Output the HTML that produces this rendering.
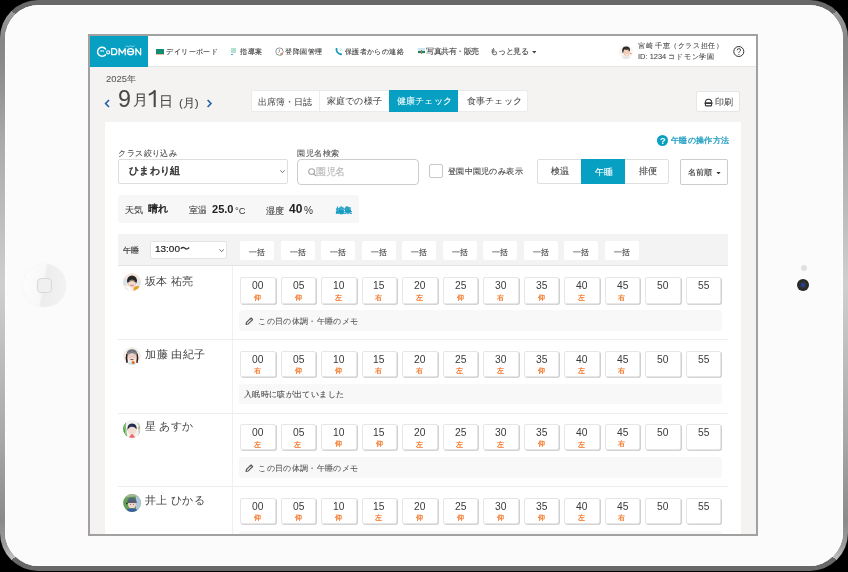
<!DOCTYPE html>
<html lang="ja">
<head>
<meta charset="utf-8">
<style>
*{box-sizing:border-box;margin:0;padding:0}
html,body{width:848px;height:572px;overflow:hidden;background:#000;font-family:"Liberation Sans",sans-serif;color:#333}
#dev{position:absolute;left:0;top:0;width:848px;height:571px;border-radius:38px;
 background:conic-gradient(from -56.4deg at 50% 50%,#686868 0deg 112.8deg,transparent 112.8deg 180deg,#686868 180deg 292.8deg,transparent 292.8deg 360deg),
 linear-gradient(to bottom,#a8a8a8 0px,#9a9a9a 14px,#858585 40px,#8c8c8c 70px,#aaa 140px,#cfcfcf 285px,#a8a8a8 440px,#8a8a8a 520px,#9a9a9a 545px,#c4c4c4 560px,#c4c4c4 571px)}
#bez{position:absolute;left:5px;top:5px;width:838px;height:561px;border-radius:34px;background:#fbfbfb;box-shadow:inset 0 1px 0 #fff,inset 1px 0 0 #fff,inset -1px 0 0 #fff,inset 0 -1px 0 #fff}
#topband{position:absolute;left:30px;top:0;width:788px;height:5px;background:#666}
#botband{position:absolute;left:30px;top:565px;width:788px;height:6px;background:linear-gradient(#666,#666 80%,#777)}
#home{position:absolute;left:23px;top:264px;width:43px;height:43px;border-radius:50%;background:linear-gradient(100deg,#fdfdfd 0%,#f8f8f8 45%,#ededed 50%,#f3f3f3 100%);box-shadow:0 0 1px #ddd}
#home i{position:absolute;left:14px;top:14px;width:15px;height:15px;border-radius:4px;border:1px solid #d8d8d8;background:#f0f0f0}
#cam1{position:absolute;left:801px;top:265px;width:6px;height:6px;border-radius:50%;background:#e0e0e0}
#cam2{position:absolute;left:797px;top:279px;width:12px;height:12px;border-radius:50%;background:radial-gradient(circle at 50% 50%,#2040a0 0,#2040a0 1.5px,#333 2.5px,#222 6px)}
#scr{position:absolute;left:88px;top:34px;width:670px;height:502px;border:2px solid #a2a0a0;background:#f4f3f1;overflow:hidden}
#app{position:absolute;left:0;top:0;width:666px;height:498px;overflow:hidden}
.a{position:absolute}
.t{white-space:nowrap;transform-origin:0 0;filter:brightness(1)}
.av{width:18px;height:18px;border-radius:50%;background:radial-gradient(circle at 50% 55%,#f4d2b8 0,#f4d2b8 35%,#6a4a3a 37%,#e8e0d8 60%,#d7b58a 100%)}
.av1{background:radial-gradient(circle at 50% 55%,#f4d2b8 0,#f4d2b8 35%,#8a6a5a 37%,#eee 60%,#cfc 100%)}
.av2{background:radial-gradient(circle at 50% 55%,#f4d2b8 0,#f4d2b8 35%,#3a3a3a 37%,#e9eee3 60%,#7ab07a 100%)}
.av3{background:radial-gradient(circle at 50% 55%,#f4d2b8 0,#f4d2b8 35%,#3a4a6a 37%,#c8d8c0 60%,#7aa07a 100%)}
</style>
</head>
<body>
<div id="dev"></div>
<div id="bez"></div>
<div id="home"><i></i></div>
<div id="cam1"></div>
<div id="cam2"></div>
<div id="scr"><div id="app">
<div class="a" style="left:0.00px;top:0.00px;width:666.00px;height:31.00px;background:#fff;border-bottom:1px solid #e6e6e6"></div>
<div class="a" style="left:0.00px;top:0.00px;width:58.00px;height:31.00px;background:#07a0c3"></div>
<svg class="a" style="left:4px;top:5px" width="50" height="20" viewBox="94 41 50 20">
<path d="M105.5 48.9 A4.5 4.5 0 1 0 105.5 54.7" fill="none" stroke="#fff" stroke-width="1.5" stroke-linecap="round"/>
<rect x="100.6" y="50.1" width="1" height="2" rx="0.4" fill="#fff"/><rect x="102.6" y="50.1" width="1" height="2" rx="0.4" fill="#fff"/>
<circle cx="108.15" cy="52.3" r="1.55" fill="none" stroke="#fff" stroke-width="1.1"/>
<g fill="none" stroke="#fff" stroke-width="1.3" stroke-linejoin="round" stroke-linecap="round">
<path d="M111.7 48.7 V54.7 H113.9 Q116.8 54.7 116.8 51.7 Q116.8 48.7 113.9 48.7 Z"/>
<path d="M119.1 54.8 V48.7 L122.15 53.2 L125.2 48.7 V54.8"/>
<circle cx="130.55" cy="51.7" r="3.05"/><path d="M128.6 51.7 H132.5"/>
<path d="M135.9 54.8 V48.7 L140.6 54.8 V48.7"/>
</g>
<path d="M125.5 46.6 Q126.5 45.6 127.5 46.4 Q128.6 47.2 129.6 46.2 Q130.6 45.4 131.6 46.3 Q132.7 47.1 134.5 45.8" fill="none" stroke="#fff" stroke-width="0.55" opacity="0.9"/>
</svg>
<div class="a" style="left:66.20px;top:12.80px;width:7.40px;height:5.80px;background:#118c74;border-bottom:1.2px solid #f4b896"></div>
<div class="a" style="left:141.40px;top:12.20px;width:5.00px;height:6.80px;background:linear-gradient(#b5e0d0 0,#b5e0d0 75%,#fff 75%)"></div>
<div class="a" style="left:141.40px;top:17.60px;width:1.60px;height:1.40px;background:#39a9d8"></div>
<svg class="a" style="left:184.50px;top:11.00px" width="9.5" height="9.5" viewBox="0 0 9.5 9.5"><circle cx="4.5" cy="4.6" r="3.7" fill="#fff" stroke="#8a8a8a" stroke-width="0.9"/><path d="M4.5 2.4 V4.6 L3 5.6" fill="none" stroke="#777" stroke-width="0.7"/><circle cx="6.6" cy="7.1" r="1.3" fill="#e98a5a"/><circle cx="5.6" cy="7.9" r="0.8" fill="#6cc3d6"/></svg>
<svg class="a" style="left:245.00px;top:11.00px" width="9" height="9" viewBox="0 0 9 9"><path d="M1.4 2.2 Q1.2 5.6 5.6 7.4" fill="none" stroke="#1395bb" stroke-width="1.5" stroke-linecap="round"/><circle cx="1.6" cy="1.9" r="0.95" fill="#1395bb"/><circle cx="6" cy="7.2" r="1" fill="#1395bb"/><path d="M4.9 1 Q6.8 1.8 7.5 3.8 M4.5 2.6 Q5.6 3 6 4" fill="none" stroke="#a8d8e8" stroke-width="0.8"/></svg>
<div class="a" style="left:327.50px;top:12.00px;width:7.00px;height:6.00px;background:linear-gradient(#c5e8f4 0,#c5e8f4 55%,#19885f 55%,#19885f 80%,#def 80%)"></div>
<div class="a" style="left:330.70px;top:14.00px;width:1.80px;height:3.50px;background:#e8622f"></div>
<div class="a t" style="left:75.83px;top:11.59px;font-size:29.40px;line-height:29.40px;color:#444;font-weight:400;-webkit-text-stroke:0.45px #444;transform:scale(0.2500);">デイリーボード</div>
<div class="a t" style="left:150.20px;top:11.77px;font-size:29.83px;line-height:29.83px;color:#444;font-weight:400;-webkit-text-stroke:0.45px #444;transform:scale(0.2500);">指導案</div>
<div class="a t" style="left:195.01px;top:11.74px;font-size:29.74px;line-height:29.74px;color:#444;font-weight:400;-webkit-text-stroke:0.45px #444;transform:scale(0.2500);">登降園管理</div>
<div class="a t" style="left:255.10px;top:11.81px;font-size:29.21px;line-height:29.21px;color:#444;font-weight:400;-webkit-text-stroke:0.45px #444;transform:scale(0.2500);">保護者からの連絡</div>
<div class="a t" style="left:336.31px;top:11.69px;font-size:30.14px;line-height:30.14px;color:#444;font-weight:400;-webkit-text-stroke:0.45px #444;transform:scale(0.2500);">写真共有・販売</div>
<div class="a t" style="left:400.19px;top:11.50px;font-size:30.15px;line-height:30.15px;color:#444;font-weight:400;-webkit-text-stroke:0.45px #444;transform:scale(0.2500);">もっと見る</div>
<svg class="a" style="left:441.80px;top:15.20px" width="4.5" height="2.5" viewBox="0 0 5 3"><path d="M0 0 L5 0 L2.5 3Z" fill="#444"/></svg>
<svg class="a" style="left:529.00px;top:8.60px" width="14" height="14" viewBox="0 0 14 14"><defs><clipPath id="ua"><circle cx="7" cy="7" r="6.9"/></clipPath></defs><g clip-path="url(#ua)">
<rect width="14" height="14" fill="#f6f4f2"/><path d="M3.2 7 Q2.6 1.6 7.4 1.6 Q11.6 1.8 11 6.4 Q9.6 3.6 6.4 4.2 Q4.6 4.8 4.2 8.4Z" fill="#2a2624"/>
<ellipse cx="7.6" cy="7.4" rx="3.1" ry="3.6" fill="#f0cdb8"/><path d="M6.4 9.6 Q7.6 10.4 9 9.5" stroke="#fff" stroke-width="0.7" fill="none"/><path d="M6.2 4.3 Q9 3.6 10.8 6" fill="none" stroke="#2a2624" stroke-width="1"/>
<path d="M2 14 Q4 10.6 7.6 11.4 Q11 10.8 12.5 14Z" fill="#e8e4e0"/><circle cx="11.8" cy="8.6" r="0.8" fill="#f08050"/></g></svg>
<div class="a t" style="left:548.42px;top:6.27px;font-size:29.53px;line-height:29.53px;color:#444;font-weight:400;-webkit-text-stroke:0.30px #444;transform:scale(0.2500);">宮崎 千恵（クラス担任）</div>
<div class="a t" style="left:547.85px;top:17.01px;font-size:29.91px;line-height:29.91px;color:#444;font-weight:400;-webkit-text-stroke:0.30px #444;transform:scale(0.2500);">ID: 1234 コドモン学園</div>
<svg class="a" style="left:643.00px;top:10.00px" width="12" height="11" viewBox="0 0 12 11"><circle cx="5.8" cy="5.5" r="5" fill="none" stroke="#333" stroke-width="1"/><path d="M4.2 4.3 Q4.2 2.6 5.9 2.6 Q7.6 2.6 7.6 4.1 Q7.6 5 6.6 5.5 Q5.9 5.9 5.9 6.8" fill="none" stroke="#333" stroke-width="0.9"/><circle cx="5.9" cy="8.3" r="0.55" fill="#333"/></svg>
<div class="a t" style="left:16.33px;top:38.14px;font-size:37.50px;line-height:37.50px;color:#555;font-weight:400;-webkit-text-stroke:0.20px #555;transform:scale(0.2500);">2025年</div>
<svg class="a" style="left:14.00px;top:62.50px" width="7" height="9" viewBox="0 0 7 9"><path d="M5 1 L1.6 4.5 L5 8" fill="none" stroke="#1d5fa8" stroke-width="1.6"/></svg>
<svg class="a" style="left:116.00px;top:62.50px" width="7" height="9" viewBox="0 0 7 9"><path d="M1.6 1 L5 4.5 L1.6 8" fill="none" stroke="#1d5fa8" stroke-width="1.6"/></svg>
<div class="a t" style="left:28.10px;top:51.10px;font-size:46.59px;line-height:46.59px;color:#484848;font-weight:400;-webkit-text-stroke:0.00px #484848;transform:scale(0.5000);">9</div>
<div class="a t" style="left:43.30px;top:57.36px;font-size:58.63px;line-height:58.63px;color:#484848;font-weight:400;-webkit-text-stroke:0.20px #484848;transform:scale(0.2500);">月</div>
<svg class="a" style="left:56.00px;top:52.00px" width="14" height="21" viewBox="146 88 14 21"><path d="M154.7 90.3 V107.1" stroke="#484848" stroke-width="2.1"/><path d="M155 90.6 Q152.6 93.6 148.8 94.9" fill="none" stroke="#484848" stroke-width="1.8"/></svg>
<div class="a t" style="left:69.02px;top:57.53px;font-size:56.89px;line-height:56.89px;color:#484848;font-weight:400;-webkit-text-stroke:0.20px #484848;transform:scale(0.2500);">日</div>
<div class="a t" style="left:88.72px;top:60.65px;font-size:46.92px;line-height:46.92px;color:#484848;font-weight:400;-webkit-text-stroke:0.30px #484848;transform:scale(0.2500);">(月)</div>
<div class="a" style="left:160.80px;top:54.20px;width:277.00px;height:21.40px;background:#fff;border:1px solid #ebebeb;border-radius:2px"></div>
<div class="a" style="left:229.30px;top:55.00px;width:1.00px;height:20.00px;background:#ececec"></div>
<div class="a" style="left:299.00px;top:54.20px;width:69.30px;height:21.50px;background:#07a0c3"></div>
<div class="a t" style="left:167.92px;top:60.62px;font-size:36.32px;line-height:36.32px;color:#444;font-weight:400;-webkit-text-stroke:0.10px #444;transform:scale(0.2500);">出席簿・日誌</div>
<div class="a t" style="left:237.45px;top:60.56px;font-size:35.90px;line-height:35.90px;color:#444;font-weight:400;-webkit-text-stroke:0.10px #444;transform:scale(0.2500);">家庭での様子</div>
<div class="a t" style="left:307.10px;top:60.58px;font-size:35.80px;line-height:35.80px;color:#fff;font-weight:400;-webkit-text-stroke:0.30px #fff;transform:scale(0.2500);">健康チェック</div>
<div class="a t" style="left:376.68px;top:60.59px;font-size:35.68px;line-height:35.68px;color:#444;font-weight:400;-webkit-text-stroke:0.10px #444;transform:scale(0.2500);">食事チェック</div>
<div class="a" style="left:606.30px;top:55.40px;width:44.20px;height:21.00px;background:#fff;border:1px solid #e6e6e6;border-radius:2px"></div>
<svg class="a" style="left:614.00px;top:61.50px" width="9" height="9" viewBox="0 0 9 9"><path d="M1.4 4.4 Q1.4 1.3 4.5 1.3 Q7.6 1.3 7.6 4.4" fill="none" stroke="#333" stroke-width="1.1"/><rect x="0.5" y="4.2" width="8" height="1.9" rx="0.4" fill="#333"/><path d="M1.4 6 V6.9 Q1.4 7.9 2.4 7.9 H6.6 Q7.6 7.9 7.6 6.9 V6" fill="none" stroke="#333" stroke-width="1.1"/></svg>
<div class="a t" style="left:624.72px;top:61.10px;font-size:36.27px;line-height:36.27px;color:#444;font-weight:400;-webkit-text-stroke:0.20px #444;transform:scale(0.2500);">印刷</div>
<div class="a" style="left:15.00px;top:86.00px;width:636.00px;height:420.00px;background:#fff"></div>
<div class="a" style="left:567px;top:98.80000000000001px;width:11.2px;height:11.2px;border-radius:50%;background:#07a0c3"></div>
<div class="a t" style="left:569.67px;top:99.59px;font-size:37.71px;line-height:37.71px;color:#fff;font-weight:700;-webkit-text-stroke:0.00px #fff;transform:scale(0.2500);">?</div>
<div class="a t" style="left:580.69px;top:100.49px;font-size:32.86px;line-height:32.86px;color:#1a9cc2;font-weight:400;-webkit-text-stroke:1.20px #1a9cc2;transform:scale(0.2500);">午睡の操作方法</div>
<div class="a t" style="left:27.79px;top:112.93px;font-size:32.58px;line-height:32.58px;color:#555;font-weight:400;-webkit-text-stroke:0.45px #555;transform:scale(0.2500);">クラス絞り込み</div>
<div class="a" style="left:27.80px;top:123.20px;width:170.00px;height:25.30px;border:1px solid #dedede;border-radius:2px;background:#fff"></div>
<div class="a t" style="left:38.50px;top:130.04px;font-size:39.88px;line-height:39.88px;color:#333;font-weight:400;-webkit-text-stroke:1.80px #333;transform:scale(0.2500);">ひまわり組</div>
<svg class="a" style="left:189.50px;top:133.50px" width="5" height="3" viewBox="0 0 5 3"><path d="M0.3 0.3 L2.5 2.6 L4.7 0.3" fill="none" stroke="#555" stroke-width="0.8"/></svg>
<div class="a t" style="left:207.48px;top:112.68px;font-size:33.71px;line-height:33.71px;color:#555;font-weight:400;-webkit-text-stroke:0.45px #555;transform:scale(0.2500);">園児名検索</div>
<div class="a" style="left:207.40px;top:123.00px;width:121.40px;height:25.60px;border:1px solid #cdcdcd;border-radius:4px;background:#fff"></div>
<svg class="a" style="left:218.30px;top:131.90px" width="8.5" height="8.5" viewBox="0 0 8.5 8.5"><circle cx="3.6" cy="3.6" r="2.9" fill="none" stroke="#a8a8a8" stroke-width="1.1"/><path d="M5.7 5.7 L7.9 7.9" stroke="#a8a8a8" stroke-width="1.3" stroke-linecap="round"/></svg>
<div class="a t" style="left:225.92px;top:130.99px;font-size:38.29px;line-height:38.29px;color:#b8b8b8;font-weight:400;-webkit-text-stroke:0.45px #b8b8b8;transform:scale(0.2500);">園児名</div>
<div class="a" style="left:338.60px;top:128.10px;width:14.20px;height:14.30px;border:1px solid #c8c8c8;border-radius:2px;background:#fff"></div>
<div class="a t" style="left:357.89px;top:130.89px;font-size:32.89px;line-height:32.89px;color:#444;font-weight:400;-webkit-text-stroke:0.45px #444;transform:scale(0.2500);">登園中園児のみ表示</div>
<div class="a" style="left:447.30px;top:123.00px;width:132.00px;height:25.40px;border:1px solid #dfdfdf;border-radius:2px;background:#fff"></div>
<div class="a" style="left:491.30px;top:123.00px;width:43.70px;height:25.40px;background:#07a0c3"></div>
<div class="a t" style="left:461.10px;top:131.10px;font-size:34.84px;line-height:34.84px;color:#444;font-weight:400;-webkit-text-stroke:0.45px #444;transform:scale(0.2500);">検温</div>
<div class="a t" style="left:504.57px;top:131.49px;font-size:36.10px;line-height:36.10px;color:#fff;font-weight:400;-webkit-text-stroke:0.45px #fff;transform:scale(0.2500);">午睡</div>
<div class="a t" style="left:548.80px;top:130.90px;font-size:35.49px;line-height:35.49px;color:#444;font-weight:400;-webkit-text-stroke:0.45px #444;transform:scale(0.2500);">排便</div>
<div class="a" style="left:590.30px;top:123.20px;width:47.50px;height:25.40px;border:1px solid #cccccc;border-radius:2px;background:#fff"></div>
<div class="a t" style="left:598.40px;top:132.41px;font-size:32.27px;line-height:32.27px;color:#333;font-weight:400;-webkit-text-stroke:0.45px #333;transform:scale(0.2500);">名前順</div>
<svg class="a" style="left:625.60px;top:135.60px" width="5" height="2.5" viewBox="0 0 5 3"><path d="M0 0 L5 0 L2.5 3Z" fill="#333"/></svg>
<div class="a" style="left:28.40px;top:158.90px;width:240.40px;height:28.50px;background:#f7f7f7;border-radius:2px"></div>
<div class="a t" style="left:34.94px;top:169.31px;font-size:36.84px;line-height:36.84px;color:#444;font-weight:400;-webkit-text-stroke:0.45px #444;transform:scale(0.2500);">天気</div>
<div class="a t" style="left:58.20px;top:167.81px;font-size:39.90px;line-height:39.90px;color:#222;font-weight:400;-webkit-text-stroke:1.80px #222;transform:scale(0.2500);">晴れ</div>
<div class="a t" style="left:99.18px;top:170.06px;font-size:34.46px;line-height:34.46px;color:#444;font-weight:400;-webkit-text-stroke:0.45px #444;transform:scale(0.2500);">室温</div>
<div class="a t" style="left:122.02px;top:167.88px;font-size:44.16px;line-height:44.16px;color:#222;font-weight:700;-webkit-text-stroke:0.00px #222;transform:scale(0.2500);">25.0</div>
<div class="a t" style="left:145.34px;top:169.78px;font-size:37.78px;line-height:37.78px;color:#333;font-weight:400;-webkit-text-stroke:0.00px #333;transform:scale(0.2500);">°C</div>
<div class="a t" style="left:175.87px;top:169.69px;font-size:36.57px;line-height:36.57px;color:#444;font-weight:400;-webkit-text-stroke:0.45px #444;transform:scale(0.2500);">湿度</div>
<div class="a t" style="left:198.70px;top:167.40px;font-size:48.00px;line-height:48.00px;color:#222;font-weight:700;-webkit-text-stroke:0.00px #222;transform:scale(0.2500);">40</div>
<div class="a t" style="left:213.70px;top:169.52px;font-size:40.25px;line-height:40.25px;color:#333;font-weight:400;-webkit-text-stroke:0.00px #333;transform:scale(0.2500);">%</div>
<div class="a t" style="left:246.30px;top:169.53px;font-size:31.38px;line-height:31.38px;color:#1a9cc2;font-weight:400;-webkit-text-stroke:2.00px #1a9cc2;transform:scale(0.2500);">編集</div>
<div class="a" style="left:27.80px;top:197.80px;width:610.20px;height:32.70px;background:#f3f3f3;border-bottom:1px solid #e3e3e3"></div>
<div class="a t" style="left:32.79px;top:210.05px;font-size:33.23px;line-height:33.23px;color:#333;font-weight:400;-webkit-text-stroke:0.60px #333;transform:scale(0.2500);">午睡</div>
<div class="a" style="left:59.50px;top:204.90px;width:77.10px;height:18.40px;background:#fff;border:1px solid #e3e3e3;border-radius:2px"></div>
<div class="a t" style="left:65.35px;top:207.86px;font-size:39.94px;line-height:39.94px;color:#222;font-weight:400;-webkit-text-stroke:0.80px #222;transform:scale(0.2500);">13:00〜</div>
<svg class="a" style="left:128.90px;top:212.90px" width="5.3" height="3.1" viewBox="0 0 5 3"><path d="M0.3 0.3 L2.5 2.6 L4.7 0.3" fill="none" stroke="#555" stroke-width="0.8"/></svg>
<div class="a" style="left:150.40px;top:204.90px;width:33.70px;height:19.00px;background:#fff;border-radius:2px"></div>
<div class="a t" style="left:159.18px;top:212.16px;font-size:33.45px;line-height:33.45px;color:#444;font-weight:400;-webkit-text-stroke:0.45px #444;transform:scale(0.2500);">一括</div>
<div class="a" style="left:190.90px;top:204.90px;width:33.70px;height:19.00px;background:#fff;border-radius:2px"></div>
<div class="a t" style="left:199.68px;top:212.16px;font-size:33.45px;line-height:33.45px;color:#444;font-weight:400;-webkit-text-stroke:0.45px #444;transform:scale(0.2500);">一括</div>
<div class="a" style="left:231.40px;top:204.90px;width:33.70px;height:19.00px;background:#fff;border-radius:2px"></div>
<div class="a t" style="left:240.18px;top:212.16px;font-size:33.45px;line-height:33.45px;color:#444;font-weight:400;-webkit-text-stroke:0.45px #444;transform:scale(0.2500);">一括</div>
<div class="a" style="left:271.90px;top:204.90px;width:33.70px;height:19.00px;background:#fff;border-radius:2px"></div>
<div class="a t" style="left:280.68px;top:212.16px;font-size:33.45px;line-height:33.45px;color:#444;font-weight:400;-webkit-text-stroke:0.45px #444;transform:scale(0.2500);">一括</div>
<div class="a" style="left:312.40px;top:204.90px;width:33.70px;height:19.00px;background:#fff;border-radius:2px"></div>
<div class="a t" style="left:321.18px;top:212.16px;font-size:33.45px;line-height:33.45px;color:#444;font-weight:400;-webkit-text-stroke:0.45px #444;transform:scale(0.2500);">一括</div>
<div class="a" style="left:352.90px;top:204.90px;width:33.70px;height:19.00px;background:#fff;border-radius:2px"></div>
<div class="a t" style="left:361.68px;top:212.16px;font-size:33.45px;line-height:33.45px;color:#444;font-weight:400;-webkit-text-stroke:0.45px #444;transform:scale(0.2500);">一括</div>
<div class="a" style="left:393.40px;top:204.90px;width:33.70px;height:19.00px;background:#fff;border-radius:2px"></div>
<div class="a t" style="left:402.18px;top:212.16px;font-size:33.45px;line-height:33.45px;color:#444;font-weight:400;-webkit-text-stroke:0.45px #444;transform:scale(0.2500);">一括</div>
<div class="a" style="left:433.90px;top:204.90px;width:33.70px;height:19.00px;background:#fff;border-radius:2px"></div>
<div class="a t" style="left:442.68px;top:212.16px;font-size:33.45px;line-height:33.45px;color:#444;font-weight:400;-webkit-text-stroke:0.45px #444;transform:scale(0.2500);">一括</div>
<div class="a" style="left:474.40px;top:204.90px;width:33.70px;height:19.00px;background:#fff;border-radius:2px"></div>
<div class="a t" style="left:483.18px;top:212.16px;font-size:33.45px;line-height:33.45px;color:#444;font-weight:400;-webkit-text-stroke:0.45px #444;transform:scale(0.2500);">一括</div>
<div class="a" style="left:514.90px;top:204.90px;width:33.70px;height:19.00px;background:#fff;border-radius:2px"></div>
<div class="a t" style="left:523.68px;top:212.16px;font-size:33.45px;line-height:33.45px;color:#444;font-weight:400;-webkit-text-stroke:0.45px #444;transform:scale(0.2500);">一括</div>
<div class="a" style="left:27.80px;top:303.10px;width:610.20px;height:1.00px;background:#ececec"></div>
<div class="a" style="left:142.20px;top:230.10px;width:0.80px;height:73.00px;background:#f0f0f0"></div>
<svg class="a" style="left:32.90px;top:237.30px" width="18" height="18" viewBox="0 0 18 18"><defs><clipPath id="cp0"><circle cx="9" cy="9" r="8.9"/></clipPath></defs><g clip-path="url(#cp0)"><rect width="18" height="18" fill="#f3e6de"/><path d="M0 5 Q3 4 3.5 9 L2.5 13 L0 13Z" fill="#d4e4ee"/><path d="M14.5 8 Q17 7 18 10 V13 H14.5Z" fill="#dce8f0"/><ellipse cx="9" cy="7.6" rx="5" ry="5.2" fill="#262626"/><ellipse cx="9" cy="10.6" rx="3.9" ry="3.9" fill="#f4d8c8"/><path d="M5.2 9.2 Q9 6.6 12.8 9.2 L12.8 7.4 H5.2Z" fill="#262626"/><path d="M7.2 12.2 Q9 13.2 10.8 12.2" stroke="#c56" stroke-width="0.7" fill="none"/><path d="M0.5 18 L1.5 13.5 Q4.5 12.2 8 14.5 L9.5 18Z" fill="#fafafa"/><path d="M11 14.2 Q14 12.2 16.8 13.5 L18 18 H10.5Z" fill="#e6a028"/><path d="M1.2 13.6 Q3 16.4 6 17.6 L1.5 18Z" fill="#8a4a20"/></g></svg>
<div class="a t" style="left:55.40px;top:238.68px;font-size:45.25px;line-height:45.25px;color:#444;font-weight:400;-webkit-text-stroke:0.00px #444;transform:scale(0.2500);">坂本 祐亮</div>
<div class="a" style="left:150.30px;top:241.40px;width:35.40px;height:26.20px;background:#fff;border:1px solid #e6e6e6;border-radius:2px;box-shadow:0.8px 0.8px 0 #c6c6c6"></div>
<div class="a t" style="left:162.06px;top:244.36px;font-size:41.14px;line-height:41.14px;color:#3a3a3a;font-weight:400;-webkit-text-stroke:0.00px #3a3a3a;transform:scale(0.2500);">00</div>
<div class="a t" style="left:164.07px;top:257.52px;font-size:29.20px;line-height:29.20px;color:#f36f1c;font-weight:400;-webkit-text-stroke:0.90px #f36f1c;transform:scale(0.2500);">仰</div>
<div class="a" style="left:190.80px;top:241.40px;width:35.40px;height:26.20px;background:#fff;border:1px solid #e6e6e6;border-radius:2px;box-shadow:0.8px 0.8px 0 #c6c6c6"></div>
<div class="a t" style="left:202.56px;top:244.36px;font-size:41.14px;line-height:41.14px;color:#3a3a3a;font-weight:400;-webkit-text-stroke:0.00px #3a3a3a;transform:scale(0.2500);">05</div>
<div class="a t" style="left:204.57px;top:257.52px;font-size:29.20px;line-height:29.20px;color:#f36f1c;font-weight:400;-webkit-text-stroke:0.90px #f36f1c;transform:scale(0.2500);">仰</div>
<div class="a" style="left:231.30px;top:241.40px;width:35.40px;height:26.20px;background:#fff;border:1px solid #e6e6e6;border-radius:2px;box-shadow:0.8px 0.8px 0 #c6c6c6"></div>
<div class="a t" style="left:242.94px;top:244.36px;font-size:41.14px;line-height:41.14px;color:#3a3a3a;font-weight:400;-webkit-text-stroke:0.00px #3a3a3a;transform:scale(0.2500);">10</div>
<div class="a t" style="left:244.89px;top:257.79px;font-size:29.20px;line-height:29.20px;color:#f36f1c;font-weight:400;-webkit-text-stroke:0.90px #f36f1c;transform:scale(0.2500);">左</div>
<div class="a" style="left:271.80px;top:241.40px;width:35.40px;height:26.20px;background:#fff;border:1px solid #e6e6e6;border-radius:2px;box-shadow:0.8px 0.8px 0 #c6c6c6"></div>
<div class="a t" style="left:283.44px;top:244.36px;font-size:41.14px;line-height:41.14px;color:#3a3a3a;font-weight:400;-webkit-text-stroke:0.00px #3a3a3a;transform:scale(0.2500);">15</div>
<div class="a t" style="left:285.30px;top:257.61px;font-size:29.20px;line-height:29.20px;color:#f36f1c;font-weight:400;-webkit-text-stroke:0.90px #f36f1c;transform:scale(0.2500);">右</div>
<div class="a" style="left:312.30px;top:241.40px;width:35.40px;height:26.20px;background:#fff;border:1px solid #e6e6e6;border-radius:2px;box-shadow:0.8px 0.8px 0 #c6c6c6"></div>
<div class="a t" style="left:324.06px;top:244.36px;font-size:41.14px;line-height:41.14px;color:#3a3a3a;font-weight:400;-webkit-text-stroke:0.00px #3a3a3a;transform:scale(0.2500);">20</div>
<div class="a t" style="left:325.89px;top:257.79px;font-size:29.20px;line-height:29.20px;color:#f36f1c;font-weight:400;-webkit-text-stroke:0.90px #f36f1c;transform:scale(0.2500);">左</div>
<div class="a" style="left:352.80px;top:241.40px;width:35.40px;height:26.20px;background:#fff;border:1px solid #e6e6e6;border-radius:2px;box-shadow:0.8px 0.8px 0 #c6c6c6"></div>
<div class="a t" style="left:364.56px;top:244.36px;font-size:41.14px;line-height:41.14px;color:#3a3a3a;font-weight:400;-webkit-text-stroke:0.00px #3a3a3a;transform:scale(0.2500);">25</div>
<div class="a t" style="left:366.57px;top:257.52px;font-size:29.20px;line-height:29.20px;color:#f36f1c;font-weight:400;-webkit-text-stroke:0.90px #f36f1c;transform:scale(0.2500);">仰</div>
<div class="a" style="left:393.30px;top:241.40px;width:35.40px;height:26.20px;background:#fff;border:1px solid #e6e6e6;border-radius:2px;box-shadow:0.8px 0.8px 0 #c6c6c6"></div>
<div class="a t" style="left:405.06px;top:244.36px;font-size:41.14px;line-height:41.14px;color:#3a3a3a;font-weight:400;-webkit-text-stroke:0.00px #3a3a3a;transform:scale(0.2500);">30</div>
<div class="a t" style="left:406.80px;top:257.61px;font-size:29.20px;line-height:29.20px;color:#f36f1c;font-weight:400;-webkit-text-stroke:0.90px #f36f1c;transform:scale(0.2500);">右</div>
<div class="a" style="left:433.80px;top:241.40px;width:35.40px;height:26.20px;background:#fff;border:1px solid #e6e6e6;border-radius:2px;box-shadow:0.8px 0.8px 0 #c6c6c6"></div>
<div class="a t" style="left:445.56px;top:244.36px;font-size:41.14px;line-height:41.14px;color:#3a3a3a;font-weight:400;-webkit-text-stroke:0.00px #3a3a3a;transform:scale(0.2500);">35</div>
<div class="a t" style="left:447.57px;top:257.52px;font-size:29.20px;line-height:29.20px;color:#f36f1c;font-weight:400;-webkit-text-stroke:0.90px #f36f1c;transform:scale(0.2500);">仰</div>
<div class="a" style="left:474.30px;top:241.40px;width:35.40px;height:26.20px;background:#fff;border:1px solid #e6e6e6;border-radius:2px;box-shadow:0.8px 0.8px 0 #c6c6c6"></div>
<div class="a t" style="left:486.19px;top:244.36px;font-size:41.14px;line-height:41.14px;color:#3a3a3a;font-weight:400;-webkit-text-stroke:0.00px #3a3a3a;transform:scale(0.2500);">40</div>
<div class="a t" style="left:487.89px;top:257.79px;font-size:29.20px;line-height:29.20px;color:#f36f1c;font-weight:400;-webkit-text-stroke:0.90px #f36f1c;transform:scale(0.2500);">左</div>
<div class="a" style="left:514.80px;top:241.40px;width:35.40px;height:26.20px;background:#fff;border:1px solid #e6e6e6;border-radius:2px;box-shadow:0.8px 0.8px 0 #c6c6c6"></div>
<div class="a t" style="left:526.69px;top:244.36px;font-size:41.14px;line-height:41.14px;color:#3a3a3a;font-weight:400;-webkit-text-stroke:0.00px #3a3a3a;transform:scale(0.2500);">45</div>
<div class="a t" style="left:528.30px;top:257.61px;font-size:29.20px;line-height:29.20px;color:#f36f1c;font-weight:400;-webkit-text-stroke:0.90px #f36f1c;transform:scale(0.2500);">右</div>
<div class="a" style="left:555.30px;top:241.40px;width:35.40px;height:26.20px;background:#fff;border:1px solid #e6e6e6;border-radius:2px;box-shadow:0.8px 0.8px 0 #c6c6c6"></div>
<div class="a t" style="left:567.06px;top:244.36px;font-size:41.14px;line-height:41.14px;color:#3a3a3a;font-weight:400;-webkit-text-stroke:0.00px #3a3a3a;transform:scale(0.2500);">50</div>
<div class="a" style="left:595.80px;top:241.40px;width:35.40px;height:26.20px;background:#fff;border:1px solid #e6e6e6;border-radius:2px;box-shadow:0.8px 0.8px 0 #c6c6c6"></div>
<div class="a t" style="left:607.56px;top:244.36px;font-size:41.14px;line-height:41.14px;color:#3a3a3a;font-weight:400;-webkit-text-stroke:0.00px #3a3a3a;transform:scale(0.2500);">55</div>
<div class="a" style="left:148.80px;top:274.40px;width:483.50px;height:20.70px;background:#f8f8f8;border-radius:3px"></div>
<svg class="a" style="left:155.00px;top:281.00px" width="9" height="8" viewBox="0 0 9 8"><path d="M1 7.4 L1.4 5.5 L6.1 0.9 L7.7 2.5 L3 7.1Z" fill="none" stroke="#555" stroke-width="1.05" stroke-linejoin="round"/><path d="M5.2 1.9 L6.7 3.4" stroke="#555" stroke-width="0.8"/></svg>
<div class="a t" style="left:167.77px;top:280.84px;font-size:32.91px;line-height:32.91px;color:#555;font-weight:400;-webkit-text-stroke:0.30px #555;transform:scale(0.2500);">この日の体調・午睡のメモ</div>
<div class="a" style="left:27.80px;top:376.50px;width:610.20px;height:1.00px;background:#ececec"></div>
<div class="a" style="left:142.20px;top:303.50px;width:0.80px;height:73.00px;background:#f0f0f0"></div>
<svg class="a" style="left:32.90px;top:310.70px" width="18" height="18" viewBox="0 0 18 18"><defs><clipPath id="cp1"><circle cx="9" cy="9" r="8.9"/></clipPath></defs><g clip-path="url(#cp1)"><rect width="18" height="18" fill="#f4eeea"/><path d="M3.4 10 Q2.8 2.2 9 2.2 Q15.2 2.2 14.6 10 Q13.5 4.8 9 4.8 Q4.5 4.8 3.4 10Z" fill="#6a6d74"/><ellipse cx="9" cy="9.6" rx="4.3" ry="4.6" fill="#f3d9cd"/><path d="M9 4.6 Q5 4.8 4.7 8 Q7 6 9 6.2 Q11 6 13.3 8 Q13 4.8 9 4.6Z" fill="#7a7d84"/><path d="M3.2 7 Q1.8 11 3.4 16 L4.9 15.4 Q3.9 11 4.7 7.2Z" fill="#2a1a14"/><path d="M14.8 7 Q16.2 11 14.6 16.2 L13.2 15.4 Q14.2 11 13.4 7.2Z" fill="#3a1d14"/><circle cx="7.2" cy="9.2" r="1.25" fill="none" stroke="#c4aea6" stroke-width="0.5"/><circle cx="10.8" cy="9.2" r="1.25" fill="none" stroke="#c4aea6" stroke-width="0.5"/><rect x="7.4" y="12" width="3" height="0.9" fill="#6a5048"/><path d="M4.5 18 Q5.5 14.6 9 14.9 Q12.5 14.6 13.5 18Z" fill="#c4e4f0"/><circle cx="10.2" cy="15.6" r="1.5" fill="#f46a12"/></g></svg>
<div class="a t" style="left:55.11px;top:311.90px;font-size:45.62px;line-height:45.62px;color:#444;font-weight:400;-webkit-text-stroke:0.00px #444;transform:scale(0.2500);">加藤 由紀子</div>
<div class="a" style="left:150.30px;top:314.80px;width:35.40px;height:26.20px;background:#fff;border:1px solid #e6e6e6;border-radius:2px;box-shadow:0.8px 0.8px 0 #c6c6c6"></div>
<div class="a t" style="left:162.06px;top:317.76px;font-size:41.14px;line-height:41.14px;color:#3a3a3a;font-weight:400;-webkit-text-stroke:0.00px #3a3a3a;transform:scale(0.2500);">00</div>
<div class="a t" style="left:163.80px;top:331.01px;font-size:29.20px;line-height:29.20px;color:#f36f1c;font-weight:400;-webkit-text-stroke:0.90px #f36f1c;transform:scale(0.2500);">右</div>
<div class="a" style="left:190.80px;top:314.80px;width:35.40px;height:26.20px;background:#fff;border:1px solid #e6e6e6;border-radius:2px;box-shadow:0.8px 0.8px 0 #c6c6c6"></div>
<div class="a t" style="left:202.56px;top:317.76px;font-size:41.14px;line-height:41.14px;color:#3a3a3a;font-weight:400;-webkit-text-stroke:0.00px #3a3a3a;transform:scale(0.2500);">05</div>
<div class="a t" style="left:204.57px;top:330.92px;font-size:29.20px;line-height:29.20px;color:#f36f1c;font-weight:400;-webkit-text-stroke:0.90px #f36f1c;transform:scale(0.2500);">仰</div>
<div class="a" style="left:231.30px;top:314.80px;width:35.40px;height:26.20px;background:#fff;border:1px solid #e6e6e6;border-radius:2px;box-shadow:0.8px 0.8px 0 #c6c6c6"></div>
<div class="a t" style="left:242.94px;top:317.76px;font-size:41.14px;line-height:41.14px;color:#3a3a3a;font-weight:400;-webkit-text-stroke:0.00px #3a3a3a;transform:scale(0.2500);">10</div>
<div class="a t" style="left:245.07px;top:330.92px;font-size:29.20px;line-height:29.20px;color:#f36f1c;font-weight:400;-webkit-text-stroke:0.90px #f36f1c;transform:scale(0.2500);">仰</div>
<div class="a" style="left:271.80px;top:314.80px;width:35.40px;height:26.20px;background:#fff;border:1px solid #e6e6e6;border-radius:2px;box-shadow:0.8px 0.8px 0 #c6c6c6"></div>
<div class="a t" style="left:283.44px;top:317.76px;font-size:41.14px;line-height:41.14px;color:#3a3a3a;font-weight:400;-webkit-text-stroke:0.00px #3a3a3a;transform:scale(0.2500);">15</div>
<div class="a t" style="left:285.30px;top:331.01px;font-size:29.20px;line-height:29.20px;color:#f36f1c;font-weight:400;-webkit-text-stroke:0.90px #f36f1c;transform:scale(0.2500);">右</div>
<div class="a" style="left:312.30px;top:314.80px;width:35.40px;height:26.20px;background:#fff;border:1px solid #e6e6e6;border-radius:2px;box-shadow:0.8px 0.8px 0 #c6c6c6"></div>
<div class="a t" style="left:324.06px;top:317.76px;font-size:41.14px;line-height:41.14px;color:#3a3a3a;font-weight:400;-webkit-text-stroke:0.00px #3a3a3a;transform:scale(0.2500);">20</div>
<div class="a t" style="left:325.80px;top:331.01px;font-size:29.20px;line-height:29.20px;color:#f36f1c;font-weight:400;-webkit-text-stroke:0.90px #f36f1c;transform:scale(0.2500);">右</div>
<div class="a" style="left:352.80px;top:314.80px;width:35.40px;height:26.20px;background:#fff;border:1px solid #e6e6e6;border-radius:2px;box-shadow:0.8px 0.8px 0 #c6c6c6"></div>
<div class="a t" style="left:364.56px;top:317.76px;font-size:41.14px;line-height:41.14px;color:#3a3a3a;font-weight:400;-webkit-text-stroke:0.00px #3a3a3a;transform:scale(0.2500);">25</div>
<div class="a t" style="left:366.39px;top:331.19px;font-size:29.20px;line-height:29.20px;color:#f36f1c;font-weight:400;-webkit-text-stroke:0.90px #f36f1c;transform:scale(0.2500);">左</div>
<div class="a" style="left:393.30px;top:314.80px;width:35.40px;height:26.20px;background:#fff;border:1px solid #e6e6e6;border-radius:2px;box-shadow:0.8px 0.8px 0 #c6c6c6"></div>
<div class="a t" style="left:405.06px;top:317.76px;font-size:41.14px;line-height:41.14px;color:#3a3a3a;font-weight:400;-webkit-text-stroke:0.00px #3a3a3a;transform:scale(0.2500);">30</div>
<div class="a t" style="left:406.89px;top:331.19px;font-size:29.20px;line-height:29.20px;color:#f36f1c;font-weight:400;-webkit-text-stroke:0.90px #f36f1c;transform:scale(0.2500);">左</div>
<div class="a" style="left:433.80px;top:314.80px;width:35.40px;height:26.20px;background:#fff;border:1px solid #e6e6e6;border-radius:2px;box-shadow:0.8px 0.8px 0 #c6c6c6"></div>
<div class="a t" style="left:445.56px;top:317.76px;font-size:41.14px;line-height:41.14px;color:#3a3a3a;font-weight:400;-webkit-text-stroke:0.00px #3a3a3a;transform:scale(0.2500);">35</div>
<div class="a t" style="left:447.57px;top:330.92px;font-size:29.20px;line-height:29.20px;color:#f36f1c;font-weight:400;-webkit-text-stroke:0.90px #f36f1c;transform:scale(0.2500);">仰</div>
<div class="a" style="left:474.30px;top:314.80px;width:35.40px;height:26.20px;background:#fff;border:1px solid #e6e6e6;border-radius:2px;box-shadow:0.8px 0.8px 0 #c6c6c6"></div>
<div class="a t" style="left:486.19px;top:317.76px;font-size:41.14px;line-height:41.14px;color:#3a3a3a;font-weight:400;-webkit-text-stroke:0.00px #3a3a3a;transform:scale(0.2500);">40</div>
<div class="a t" style="left:487.89px;top:331.19px;font-size:29.20px;line-height:29.20px;color:#f36f1c;font-weight:400;-webkit-text-stroke:0.90px #f36f1c;transform:scale(0.2500);">左</div>
<div class="a" style="left:514.80px;top:314.80px;width:35.40px;height:26.20px;background:#fff;border:1px solid #e6e6e6;border-radius:2px;box-shadow:0.8px 0.8px 0 #c6c6c6"></div>
<div class="a t" style="left:526.69px;top:317.76px;font-size:41.14px;line-height:41.14px;color:#3a3a3a;font-weight:400;-webkit-text-stroke:0.00px #3a3a3a;transform:scale(0.2500);">45</div>
<div class="a t" style="left:528.30px;top:331.01px;font-size:29.20px;line-height:29.20px;color:#f36f1c;font-weight:400;-webkit-text-stroke:0.90px #f36f1c;transform:scale(0.2500);">右</div>
<div class="a" style="left:555.30px;top:314.80px;width:35.40px;height:26.20px;background:#fff;border:1px solid #e6e6e6;border-radius:2px;box-shadow:0.8px 0.8px 0 #c6c6c6"></div>
<div class="a t" style="left:567.06px;top:317.76px;font-size:41.14px;line-height:41.14px;color:#3a3a3a;font-weight:400;-webkit-text-stroke:0.00px #3a3a3a;transform:scale(0.2500);">50</div>
<div class="a" style="left:595.80px;top:314.80px;width:35.40px;height:26.20px;background:#fff;border:1px solid #e6e6e6;border-radius:2px;box-shadow:0.8px 0.8px 0 #c6c6c6"></div>
<div class="a t" style="left:607.56px;top:317.76px;font-size:41.14px;line-height:41.14px;color:#3a3a3a;font-weight:400;-webkit-text-stroke:0.00px #3a3a3a;transform:scale(0.2500);">55</div>
<div class="a" style="left:148.80px;top:347.80px;width:483.50px;height:20.70px;background:#f8f8f8;border-radius:3px"></div>
<div class="a t" style="left:154.30px;top:354.18px;font-size:32.53px;line-height:32.53px;color:#444;font-weight:400;-webkit-text-stroke:0.30px #444;transform:scale(0.2500);">入眠時に咳が出ていました</div>
<div class="a" style="left:27.80px;top:449.90px;width:610.20px;height:1.00px;background:#ececec"></div>
<div class="a" style="left:142.20px;top:376.90px;width:0.80px;height:73.00px;background:#f0f0f0"></div>
<svg class="a" style="left:32.90px;top:384.10px" width="18" height="18" viewBox="0 0 18 18"><defs><clipPath id="cp2"><circle cx="9" cy="9" r="8.9"/></clipPath></defs><g clip-path="url(#cp2)"><rect width="18" height="18" fill="#f1f1ee"/><path d="M0 0 H3.6 Q2 6 3.4 10 Q2.6 15 5.6 18 H0Z" fill="#4a9a52"/><path d="M1.2 2.5 Q3 5 1.8 8 Q3.6 11 2.2 14.5" stroke="#9ccc7a" stroke-width="1.2" fill="none"/><path d="M15 2.5 Q17.2 6 16 10 Q17.2 13 15.4 16" stroke="#a8c8a4" stroke-width="1.1" fill="none"/><circle cx="16" cy="8" r="0.8" fill="#e07070"/><ellipse cx="9" cy="10.4" rx="3.9" ry="4" fill="#f5dcd0"/><path d="M4.4 10.2 Q4 3.2 9.2 3.4 Q14.2 3.6 13.6 9.6 Q12.2 6.6 9 6.8 Q6.2 6.8 4.4 10.2Z" fill="#1f2a48"/><path d="M6 6.4 Q8 4.4 10.4 6.6" stroke="#3a4a7a" stroke-width="0.8" fill="none"/><path d="M5.6 18 L8 14.4 Q9 13.8 10 14.4 L12.8 18Z" fill="#ee6a6a"/></g></svg>
<div class="a t" style="left:55.42px;top:385.49px;font-size:44.73px;line-height:44.73px;color:#444;font-weight:400;-webkit-text-stroke:0.00px #444;transform:scale(0.2500);">星 あすか</div>
<div class="a" style="left:150.30px;top:388.20px;width:35.40px;height:26.20px;background:#fff;border:1px solid #e6e6e6;border-radius:2px;box-shadow:0.8px 0.8px 0 #c6c6c6"></div>
<div class="a t" style="left:162.06px;top:391.16px;font-size:41.14px;line-height:41.14px;color:#3a3a3a;font-weight:400;-webkit-text-stroke:0.00px #3a3a3a;transform:scale(0.2500);">00</div>
<div class="a t" style="left:163.89px;top:404.59px;font-size:29.20px;line-height:29.20px;color:#f36f1c;font-weight:400;-webkit-text-stroke:0.90px #f36f1c;transform:scale(0.2500);">左</div>
<div class="a" style="left:190.80px;top:388.20px;width:35.40px;height:26.20px;background:#fff;border:1px solid #e6e6e6;border-radius:2px;box-shadow:0.8px 0.8px 0 #c6c6c6"></div>
<div class="a t" style="left:202.56px;top:391.16px;font-size:41.14px;line-height:41.14px;color:#3a3a3a;font-weight:400;-webkit-text-stroke:0.00px #3a3a3a;transform:scale(0.2500);">05</div>
<div class="a t" style="left:204.39px;top:404.59px;font-size:29.20px;line-height:29.20px;color:#f36f1c;font-weight:400;-webkit-text-stroke:0.90px #f36f1c;transform:scale(0.2500);">左</div>
<div class="a" style="left:231.30px;top:388.20px;width:35.40px;height:26.20px;background:#fff;border:1px solid #e6e6e6;border-radius:2px;box-shadow:0.8px 0.8px 0 #c6c6c6"></div>
<div class="a t" style="left:242.94px;top:391.16px;font-size:41.14px;line-height:41.14px;color:#3a3a3a;font-weight:400;-webkit-text-stroke:0.00px #3a3a3a;transform:scale(0.2500);">10</div>
<div class="a t" style="left:245.07px;top:404.32px;font-size:29.20px;line-height:29.20px;color:#f36f1c;font-weight:400;-webkit-text-stroke:0.90px #f36f1c;transform:scale(0.2500);">仰</div>
<div class="a" style="left:271.80px;top:388.20px;width:35.40px;height:26.20px;background:#fff;border:1px solid #e6e6e6;border-radius:2px;box-shadow:0.8px 0.8px 0 #c6c6c6"></div>
<div class="a t" style="left:283.44px;top:391.16px;font-size:41.14px;line-height:41.14px;color:#3a3a3a;font-weight:400;-webkit-text-stroke:0.00px #3a3a3a;transform:scale(0.2500);">15</div>
<div class="a t" style="left:285.57px;top:404.32px;font-size:29.20px;line-height:29.20px;color:#f36f1c;font-weight:400;-webkit-text-stroke:0.90px #f36f1c;transform:scale(0.2500);">仰</div>
<div class="a" style="left:312.30px;top:388.20px;width:35.40px;height:26.20px;background:#fff;border:1px solid #e6e6e6;border-radius:2px;box-shadow:0.8px 0.8px 0 #c6c6c6"></div>
<div class="a t" style="left:324.06px;top:391.16px;font-size:41.14px;line-height:41.14px;color:#3a3a3a;font-weight:400;-webkit-text-stroke:0.00px #3a3a3a;transform:scale(0.2500);">20</div>
<div class="a t" style="left:325.89px;top:404.59px;font-size:29.20px;line-height:29.20px;color:#f36f1c;font-weight:400;-webkit-text-stroke:0.90px #f36f1c;transform:scale(0.2500);">左</div>
<div class="a" style="left:352.80px;top:388.20px;width:35.40px;height:26.20px;background:#fff;border:1px solid #e6e6e6;border-radius:2px;box-shadow:0.8px 0.8px 0 #c6c6c6"></div>
<div class="a t" style="left:364.56px;top:391.16px;font-size:41.14px;line-height:41.14px;color:#3a3a3a;font-weight:400;-webkit-text-stroke:0.00px #3a3a3a;transform:scale(0.2500);">25</div>
<div class="a t" style="left:366.39px;top:404.59px;font-size:29.20px;line-height:29.20px;color:#f36f1c;font-weight:400;-webkit-text-stroke:0.90px #f36f1c;transform:scale(0.2500);">左</div>
<div class="a" style="left:393.30px;top:388.20px;width:35.40px;height:26.20px;background:#fff;border:1px solid #e6e6e6;border-radius:2px;box-shadow:0.8px 0.8px 0 #c6c6c6"></div>
<div class="a t" style="left:405.06px;top:391.16px;font-size:41.14px;line-height:41.14px;color:#3a3a3a;font-weight:400;-webkit-text-stroke:0.00px #3a3a3a;transform:scale(0.2500);">30</div>
<div class="a t" style="left:406.89px;top:404.59px;font-size:29.20px;line-height:29.20px;color:#f36f1c;font-weight:400;-webkit-text-stroke:0.90px #f36f1c;transform:scale(0.2500);">左</div>
<div class="a" style="left:433.80px;top:388.20px;width:35.40px;height:26.20px;background:#fff;border:1px solid #e6e6e6;border-radius:2px;box-shadow:0.8px 0.8px 0 #c6c6c6"></div>
<div class="a t" style="left:445.56px;top:391.16px;font-size:41.14px;line-height:41.14px;color:#3a3a3a;font-weight:400;-webkit-text-stroke:0.00px #3a3a3a;transform:scale(0.2500);">35</div>
<div class="a t" style="left:447.57px;top:404.32px;font-size:29.20px;line-height:29.20px;color:#f36f1c;font-weight:400;-webkit-text-stroke:0.90px #f36f1c;transform:scale(0.2500);">仰</div>
<div class="a" style="left:474.30px;top:388.20px;width:35.40px;height:26.20px;background:#fff;border:1px solid #e6e6e6;border-radius:2px;box-shadow:0.8px 0.8px 0 #c6c6c6"></div>
<div class="a t" style="left:486.19px;top:391.16px;font-size:41.14px;line-height:41.14px;color:#3a3a3a;font-weight:400;-webkit-text-stroke:0.00px #3a3a3a;transform:scale(0.2500);">40</div>
<div class="a t" style="left:487.89px;top:404.59px;font-size:29.20px;line-height:29.20px;color:#f36f1c;font-weight:400;-webkit-text-stroke:0.90px #f36f1c;transform:scale(0.2500);">左</div>
<div class="a" style="left:514.80px;top:388.20px;width:35.40px;height:26.20px;background:#fff;border:1px solid #e6e6e6;border-radius:2px;box-shadow:0.8px 0.8px 0 #c6c6c6"></div>
<div class="a t" style="left:526.69px;top:391.16px;font-size:41.14px;line-height:41.14px;color:#3a3a3a;font-weight:400;-webkit-text-stroke:0.00px #3a3a3a;transform:scale(0.2500);">45</div>
<div class="a t" style="left:528.30px;top:404.41px;font-size:29.20px;line-height:29.20px;color:#f36f1c;font-weight:400;-webkit-text-stroke:0.90px #f36f1c;transform:scale(0.2500);">右</div>
<div class="a" style="left:555.30px;top:388.20px;width:35.40px;height:26.20px;background:#fff;border:1px solid #e6e6e6;border-radius:2px;box-shadow:0.8px 0.8px 0 #c6c6c6"></div>
<div class="a t" style="left:567.06px;top:391.16px;font-size:41.14px;line-height:41.14px;color:#3a3a3a;font-weight:400;-webkit-text-stroke:0.00px #3a3a3a;transform:scale(0.2500);">50</div>
<div class="a" style="left:595.80px;top:388.20px;width:35.40px;height:26.20px;background:#fff;border:1px solid #e6e6e6;border-radius:2px;box-shadow:0.8px 0.8px 0 #c6c6c6"></div>
<div class="a t" style="left:607.56px;top:391.16px;font-size:41.14px;line-height:41.14px;color:#3a3a3a;font-weight:400;-webkit-text-stroke:0.00px #3a3a3a;transform:scale(0.2500);">55</div>
<div class="a" style="left:148.80px;top:421.20px;width:483.50px;height:20.70px;background:#f8f8f8;border-radius:3px"></div>
<svg class="a" style="left:155.00px;top:427.80px" width="9" height="8" viewBox="0 0 9 8"><path d="M1 7.4 L1.4 5.5 L6.1 0.9 L7.7 2.5 L3 7.1Z" fill="none" stroke="#555" stroke-width="1.05" stroke-linejoin="round"/><path d="M5.2 1.9 L6.7 3.4" stroke="#555" stroke-width="0.8"/></svg>
<div class="a t" style="left:167.77px;top:427.64px;font-size:32.91px;line-height:32.91px;color:#555;font-weight:400;-webkit-text-stroke:0.30px #555;transform:scale(0.2500);">この日の体調・午睡のメモ</div>
<div class="a" style="left:27.80px;top:523.30px;width:610.20px;height:1.00px;background:#ececec"></div>
<div class="a" style="left:142.20px;top:450.30px;width:0.80px;height:73.00px;background:#f0f0f0"></div>
<svg class="a" style="left:32.90px;top:457.50px" width="18" height="18" viewBox="0 0 18 18"><defs><clipPath id="cp3"><circle cx="9" cy="9" r="8.9"/></clipPath></defs><g clip-path="url(#cp3)"><rect width="18" height="18" fill="#62a057"/><rect x="13" y="0" width="5" height="18" fill="#b0c6dc"/><path d="M0 0 H18 V3 Q9 1.5 0 4Z" fill="#a6b896"/><ellipse cx="9" cy="10.2" rx="3.9" ry="4.2" fill="#f0d6ca"/><path d="M4.5 8.2 Q4.6 3.6 9 3.5 Q13.4 3.6 13.5 8.2 Z" fill="#56647a"/><path d="M4.2 7.8 H13.8 V8.8 H4.2Z" fill="#3e4a60"/><circle cx="7.5" cy="10.2" r="0.5" fill="#4a5a8a"/><circle cx="10.5" cy="10.2" r="0.5" fill="#7a4a30"/><circle cx="3.8" cy="9.6" r="0.8" fill="#222"/><path d="M2 18 Q3 14.6 9 14.3 Q15 14.6 15.5 18Z" fill="#3a5ea0"/></g></svg>
<div class="a t" style="left:55.22px;top:458.33px;font-size:45.06px;line-height:45.06px;color:#444;font-weight:400;-webkit-text-stroke:0.00px #444;transform:scale(0.2500);">井上 ひかる</div>
<div class="a" style="left:150.30px;top:461.60px;width:35.40px;height:26.20px;background:#fff;border:1px solid #e6e6e6;border-radius:2px;box-shadow:0.8px 0.8px 0 #c6c6c6"></div>
<div class="a t" style="left:162.06px;top:464.56px;font-size:41.14px;line-height:41.14px;color:#3a3a3a;font-weight:400;-webkit-text-stroke:0.00px #3a3a3a;transform:scale(0.2500);">00</div>
<div class="a t" style="left:164.07px;top:477.72px;font-size:29.20px;line-height:29.20px;color:#f36f1c;font-weight:400;-webkit-text-stroke:0.90px #f36f1c;transform:scale(0.2500);">仰</div>
<div class="a" style="left:190.80px;top:461.60px;width:35.40px;height:26.20px;background:#fff;border:1px solid #e6e6e6;border-radius:2px;box-shadow:0.8px 0.8px 0 #c6c6c6"></div>
<div class="a t" style="left:202.56px;top:464.56px;font-size:41.14px;line-height:41.14px;color:#3a3a3a;font-weight:400;-webkit-text-stroke:0.00px #3a3a3a;transform:scale(0.2500);">05</div>
<div class="a t" style="left:204.57px;top:477.72px;font-size:29.20px;line-height:29.20px;color:#f36f1c;font-weight:400;-webkit-text-stroke:0.90px #f36f1c;transform:scale(0.2500);">仰</div>
<div class="a" style="left:231.30px;top:461.60px;width:35.40px;height:26.20px;background:#fff;border:1px solid #e6e6e6;border-radius:2px;box-shadow:0.8px 0.8px 0 #c6c6c6"></div>
<div class="a t" style="left:242.94px;top:464.56px;font-size:41.14px;line-height:41.14px;color:#3a3a3a;font-weight:400;-webkit-text-stroke:0.00px #3a3a3a;transform:scale(0.2500);">10</div>
<div class="a t" style="left:245.07px;top:477.72px;font-size:29.20px;line-height:29.20px;color:#f36f1c;font-weight:400;-webkit-text-stroke:0.90px #f36f1c;transform:scale(0.2500);">仰</div>
<div class="a" style="left:271.80px;top:461.60px;width:35.40px;height:26.20px;background:#fff;border:1px solid #e6e6e6;border-radius:2px;box-shadow:0.8px 0.8px 0 #c6c6c6"></div>
<div class="a t" style="left:283.44px;top:464.56px;font-size:41.14px;line-height:41.14px;color:#3a3a3a;font-weight:400;-webkit-text-stroke:0.00px #3a3a3a;transform:scale(0.2500);">15</div>
<div class="a t" style="left:285.39px;top:477.99px;font-size:29.20px;line-height:29.20px;color:#f36f1c;font-weight:400;-webkit-text-stroke:0.90px #f36f1c;transform:scale(0.2500);">左</div>
<div class="a" style="left:312.30px;top:461.60px;width:35.40px;height:26.20px;background:#fff;border:1px solid #e6e6e6;border-radius:2px;box-shadow:0.8px 0.8px 0 #c6c6c6"></div>
<div class="a t" style="left:324.06px;top:464.56px;font-size:41.14px;line-height:41.14px;color:#3a3a3a;font-weight:400;-webkit-text-stroke:0.00px #3a3a3a;transform:scale(0.2500);">20</div>
<div class="a t" style="left:326.07px;top:477.72px;font-size:29.20px;line-height:29.20px;color:#f36f1c;font-weight:400;-webkit-text-stroke:0.90px #f36f1c;transform:scale(0.2500);">仰</div>
<div class="a" style="left:352.80px;top:461.60px;width:35.40px;height:26.20px;background:#fff;border:1px solid #e6e6e6;border-radius:2px;box-shadow:0.8px 0.8px 0 #c6c6c6"></div>
<div class="a t" style="left:364.56px;top:464.56px;font-size:41.14px;line-height:41.14px;color:#3a3a3a;font-weight:400;-webkit-text-stroke:0.00px #3a3a3a;transform:scale(0.2500);">25</div>
<div class="a t" style="left:366.57px;top:477.72px;font-size:29.20px;line-height:29.20px;color:#f36f1c;font-weight:400;-webkit-text-stroke:0.90px #f36f1c;transform:scale(0.2500);">仰</div>
<div class="a" style="left:393.30px;top:461.60px;width:35.40px;height:26.20px;background:#fff;border:1px solid #e6e6e6;border-radius:2px;box-shadow:0.8px 0.8px 0 #c6c6c6"></div>
<div class="a t" style="left:405.06px;top:464.56px;font-size:41.14px;line-height:41.14px;color:#3a3a3a;font-weight:400;-webkit-text-stroke:0.00px #3a3a3a;transform:scale(0.2500);">30</div>
<div class="a t" style="left:407.07px;top:477.72px;font-size:29.20px;line-height:29.20px;color:#f36f1c;font-weight:400;-webkit-text-stroke:0.90px #f36f1c;transform:scale(0.2500);">仰</div>
<div class="a" style="left:433.80px;top:461.60px;width:35.40px;height:26.20px;background:#fff;border:1px solid #e6e6e6;border-radius:2px;box-shadow:0.8px 0.8px 0 #c6c6c6"></div>
<div class="a t" style="left:445.56px;top:464.56px;font-size:41.14px;line-height:41.14px;color:#3a3a3a;font-weight:400;-webkit-text-stroke:0.00px #3a3a3a;transform:scale(0.2500);">35</div>
<div class="a t" style="left:447.57px;top:477.72px;font-size:29.20px;line-height:29.20px;color:#f36f1c;font-weight:400;-webkit-text-stroke:0.90px #f36f1c;transform:scale(0.2500);">仰</div>
<div class="a" style="left:474.30px;top:461.60px;width:35.40px;height:26.20px;background:#fff;border:1px solid #e6e6e6;border-radius:2px;box-shadow:0.8px 0.8px 0 #c6c6c6"></div>
<div class="a t" style="left:486.19px;top:464.56px;font-size:41.14px;line-height:41.14px;color:#3a3a3a;font-weight:400;-webkit-text-stroke:0.00px #3a3a3a;transform:scale(0.2500);">40</div>
<div class="a t" style="left:487.89px;top:477.99px;font-size:29.20px;line-height:29.20px;color:#f36f1c;font-weight:400;-webkit-text-stroke:0.90px #f36f1c;transform:scale(0.2500);">左</div>
<div class="a" style="left:514.80px;top:461.60px;width:35.40px;height:26.20px;background:#fff;border:1px solid #e6e6e6;border-radius:2px;box-shadow:0.8px 0.8px 0 #c6c6c6"></div>
<div class="a t" style="left:526.69px;top:464.56px;font-size:41.14px;line-height:41.14px;color:#3a3a3a;font-weight:400;-webkit-text-stroke:0.00px #3a3a3a;transform:scale(0.2500);">45</div>
<div class="a t" style="left:528.30px;top:477.81px;font-size:29.20px;line-height:29.20px;color:#f36f1c;font-weight:400;-webkit-text-stroke:0.90px #f36f1c;transform:scale(0.2500);">右</div>
<div class="a" style="left:555.30px;top:461.60px;width:35.40px;height:26.20px;background:#fff;border:1px solid #e6e6e6;border-radius:2px;box-shadow:0.8px 0.8px 0 #c6c6c6"></div>
<div class="a t" style="left:567.06px;top:464.56px;font-size:41.14px;line-height:41.14px;color:#3a3a3a;font-weight:400;-webkit-text-stroke:0.00px #3a3a3a;transform:scale(0.2500);">50</div>
<div class="a" style="left:595.80px;top:461.60px;width:35.40px;height:26.20px;background:#fff;border:1px solid #e6e6e6;border-radius:2px;box-shadow:0.8px 0.8px 0 #c6c6c6"></div>
<div class="a t" style="left:607.56px;top:464.56px;font-size:41.14px;line-height:41.14px;color:#3a3a3a;font-weight:400;-webkit-text-stroke:0.00px #3a3a3a;transform:scale(0.2500);">55</div>
<div class="a" style="left:148.80px;top:494.60px;width:483.50px;height:20.70px;background:#f8f8f8;border-radius:3px"></div>
<svg class="a" style="left:155.00px;top:501.20px" width="9" height="8" viewBox="0 0 9 8"><path d="M1 7.4 L1.4 5.5 L6.1 0.9 L7.7 2.5 L3 7.1Z" fill="none" stroke="#555" stroke-width="1.05" stroke-linejoin="round"/><path d="M5.2 1.9 L6.7 3.4" stroke="#555" stroke-width="0.8"/></svg>
<div class="a t" style="left:167.77px;top:501.04px;font-size:32.91px;line-height:32.91px;color:#555;font-weight:400;-webkit-text-stroke:0.30px #555;transform:scale(0.2500);">この日の体調・午睡のメモ</div>
</div></div>
</body>
</html>
